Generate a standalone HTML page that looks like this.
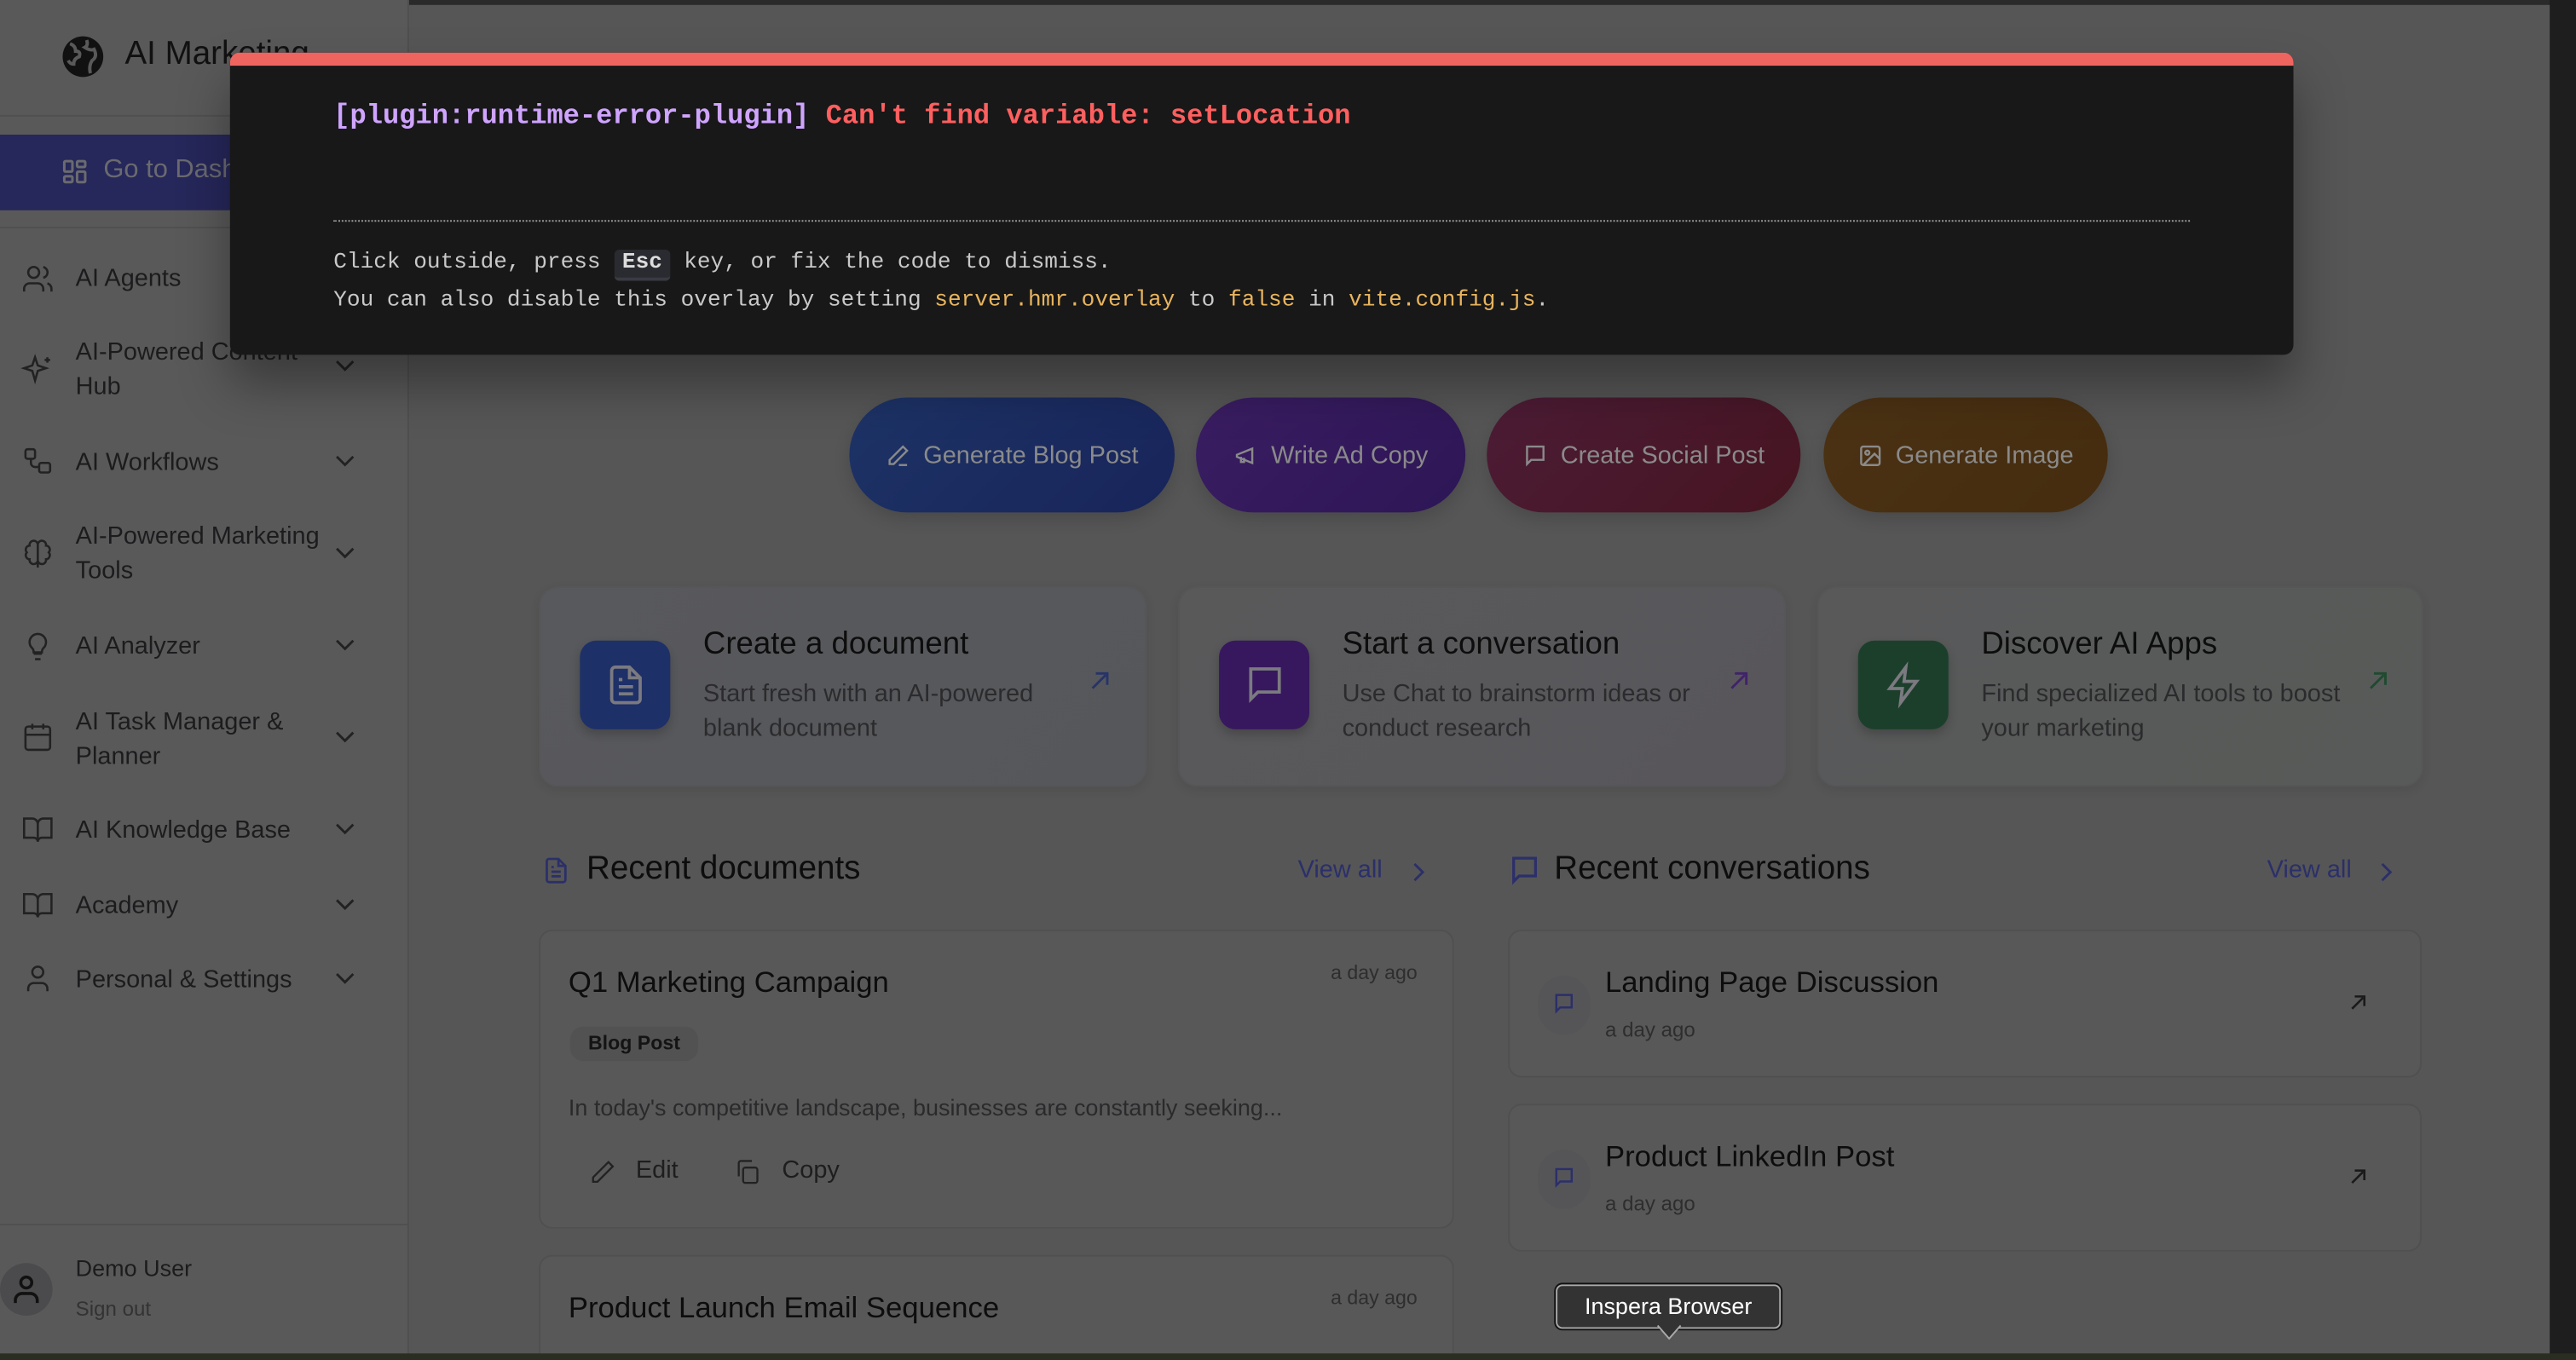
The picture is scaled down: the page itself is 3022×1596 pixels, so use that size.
<!DOCTYPE html>
<html><head><meta charset="utf-8">
<style>
html,body{margin:0;padding:0;width:3022px;height:1596px;overflow:hidden;background:#1e1e1e;}
#w{position:absolute;left:0;top:0;width:1568px;height:828px;transform:scale(1.92730,1.92754);transform-origin:0 0;font-family:"Liberation Sans",sans-serif;color:#151515;overflow:hidden;background:#565656;}
.a{position:absolute;}
.sb{left:0;top:0;width:248px;height:828px;background:#595959;border-right:1px solid #4f4f4f;}
.nav{position:absolute;left:46px;font-size:15px;color:#1c1c1e;line-height:21px;}
.ni{position:absolute;left:12px;}
.chev{position:absolute;left:204px;}
svg{overflow:visible}
.btn{position:absolute;top:242px;height:70px;border-radius:35px;color:#8a8a8a;font-size:15px;display:flex;align-items:center;justify-content:center;gap:8px;box-shadow:0 4px 10px rgba(0,0,0,.15);}
.card{position:absolute;top:357px;height:120px;border-radius:12px;background:#5a5a5c;box-shadow:0 2px 6px rgba(0,0,0,.08);border:1px solid #565658;}
.ic{position:absolute;left:24px;top:32px;width:55px;height:54px;border-radius:10px;display:flex;align-items:center;justify-content:center;box-shadow:0 3px 6px rgba(0,0,0,.2);}
.ct{position:absolute;left:99px;top:24px;font-size:19px;color:#0d0d0d;}
.cd{position:absolute;left:99px;top:54px;font-size:15px;line-height:21px;color:#2b2b2d;width:220px;}
.car{position:absolute;left:334px;top:50px;}
.dc{position:absolute;border-radius:8px;border:1px solid #505050;background:#585858;}
.mono{font-family:"Liberation Mono","DejaVu Sans Mono",monospace;}
</style></head><body>
<div id="w">
<div class="a" style="left:0;top:0;width:1568px;height:3px;background:#2a2a2a"></div>
<div class="a sb">
  <svg class="a" style="left:37px;top:21px" width="27" height="27" viewBox="0 0 24 24"><circle cx="12" cy="12" r="11" fill="#111"/><path d="M5 5 Q8 6 8 9 Q11 9 10 12 Q7 13 7 16 Q5 16 4 14 M14 3 Q15 6 13 7 Q16 9 18 8 Q20 12 17 14 Q15 17 16 21" fill="none" stroke="#595959" stroke-width="1.8"/></svg>
  <div class="a" style="left:76px;top:22px;font-size:20px;color:#111">AI Marketing</div>
  <div class="a" style="left:0;top:70px;width:248px;height:1px;background:#505050"></div>
  <div class="a" style="left:0;top:82px;width:240px;height:46px;border-radius:0 10px 10px 0;background:#26275a"></div>
  <svg class="a" style="left:37px;top:96px" width="17" height="17" viewBox="0 0 24 24" fill="none" stroke="#6a6a70" stroke-width="2.2"><rect x="3" y="3" width="7" height="9" rx="1"/><rect x="14" y="3" width="7" height="5" rx="1"/><rect x="14" y="12" width="7" height="9" rx="1"/><rect x="3" y="16" width="7" height="5" rx="1"/></svg>
  <div class="a" style="left:63px;top:95px;font-size:16px;color:#6a6a70">Go to Dashboard</div>
  <div class="a" style="left:0;top:138px;width:248px;height:1px;background:#505050"></div>

  <svg class="ni" style="top:160px" width="22" height="20" viewBox="0 0 24 24" fill="none" stroke="#222" stroke-width="1.6"><circle cx="9" cy="7" r="4"/><path d="M2 21v-2a4 4 0 0 1 4-4h6a4 4 0 0 1 4 4v2M16 3.1a4 4 0 0 1 0 7.8M22 21v-2a4 4 0 0 0-3-3.9"/></svg>
  <div class="nav" style="top:159px">AI Agents</div>

  <svg class="ni" style="top:215px" width="22" height="20" viewBox="0 0 24 24" fill="none" stroke="#222" stroke-width="1.6"><path d="M10 3l2 6 6 2-6 2-2 7-2-7-6-2 6-2z"/><path d="M19 3v4M17 5h4"/></svg>
  <div class="nav" style="top:204px">AI-Powered Content<br>Hub</div>
  <svg class="chev" style="top:219px" width="12" height="8" viewBox="0 0 12 8"><path d="M1 1l5 5 5-5" fill="none" stroke="#222" stroke-width="1.5"/></svg>

  <svg class="ni" style="top:271px" width="22" height="20" viewBox="0 0 24 24" fill="none" stroke="#222" stroke-width="1.6"><rect x="3" y="3" width="7" height="7" rx="1.5"/><rect x="13" y="13" width="8" height="7" rx="1.5"/><path d="M7 10v3a3 3 0 0 0 3 3h3"/></svg>
  <div class="nav" style="top:271px">AI Workflows</div>
  <svg class="chev" style="top:277px" width="12" height="8" viewBox="0 0 12 8"><path d="M1 1l5 5 5-5" fill="none" stroke="#222" stroke-width="1.5"/></svg>

  <svg class="ni" style="top:328px" width="22" height="20" viewBox="0 0 24 24" fill="none" stroke="#222" stroke-width="1.6"><path d="M12 4a3 3 0 0 0-6 1 3 3 0 0 0-2 5 3 3 0 0 0 2 5 3 3 0 0 0 6 1zM12 4a3 3 0 0 1 6 1 3 3 0 0 1 2 5 3 3 0 0 1-2 5 3 3 0 0 1-6 1zM12 4v17"/></svg>
  <div class="nav" style="top:316px">AI-Powered Marketing<br>Tools</div>
  <svg class="chev" style="top:333px" width="12" height="8" viewBox="0 0 12 8"><path d="M1 1l5 5 5-5" fill="none" stroke="#222" stroke-width="1.5"/></svg>

  <svg class="ni" style="top:383px" width="22" height="20" viewBox="0 0 24 24" fill="none" stroke="#222" stroke-width="1.6"><path d="M9 18h6M10 22h4M8 14a6 6 0 1 1 8 0c-1 1-1 2-1 3H9c0-1 0-2-1-3z"/></svg>
  <div class="nav" style="top:383px">AI Analyzer</div>
  <svg class="chev" style="top:389px" width="12" height="8" viewBox="0 0 12 8"><path d="M1 1l5 5 5-5" fill="none" stroke="#222" stroke-width="1.5"/></svg>

  <svg class="ni" style="top:439px" width="22" height="20" viewBox="0 0 24 24" fill="none" stroke="#222" stroke-width="1.6"><rect x="3" y="4" width="18" height="17" rx="2"/><path d="M8 2v4M16 2v4M3 10h18"/></svg>
  <div class="nav" style="top:429px">AI Task Manager &amp;<br>Planner</div>
  <svg class="chev" style="top:445px" width="12" height="8" viewBox="0 0 12 8"><path d="M1 1l5 5 5-5" fill="none" stroke="#222" stroke-width="1.5"/></svg>

  <svg class="ni" style="top:495px" width="22" height="20" viewBox="0 0 24 24" fill="none" stroke="#222" stroke-width="1.6"><path d="M2 4h6a4 4 0 0 1 4 4v13a3 3 0 0 0-3-3H2zM22 4h-6a4 4 0 0 0-4 4v13a3 3 0 0 1 3-3h7z"/></svg>
  <div class="nav" style="top:495px">AI Knowledge Base</div>
  <svg class="chev" style="top:501px" width="12" height="8" viewBox="0 0 12 8"><path d="M1 1l5 5 5-5" fill="none" stroke="#222" stroke-width="1.5"/></svg>

  <svg class="ni" style="top:541px" width="22" height="20" viewBox="0 0 24 24" fill="none" stroke="#222" stroke-width="1.6"><path d="M2 4h6a4 4 0 0 1 4 4v13a3 3 0 0 0-3-3H2zM22 4h-6a4 4 0 0 0-4 4v13a3 3 0 0 1 3-3h7z"/></svg>
  <div class="nav" style="top:541px">Academy</div>
  <svg class="chev" style="top:547px" width="12" height="8" viewBox="0 0 12 8"><path d="M1 1l5 5 5-5" fill="none" stroke="#222" stroke-width="1.5"/></svg>

  <svg class="ni" style="top:586px" width="22" height="20" viewBox="0 0 24 24" fill="none" stroke="#222" stroke-width="1.6"><circle cx="12" cy="7" r="4"/><path d="M5 21v-2a4 4 0 0 1 4-4h6a4 4 0 0 1 4 4v2"/></svg>
  <div class="nav" style="top:586px">Personal &amp; Settings</div>
  <svg class="chev" style="top:592px" width="12" height="8" viewBox="0 0 12 8"><path d="M1 1l5 5 5-5" fill="none" stroke="#222" stroke-width="1.5"/></svg>

  <div class="a" style="left:0;top:745px;width:248px;height:1px;background:#505050"></div>
  <div class="a" style="left:0;top:769px;width:32px;height:32px;border-radius:50%;background:#4b4b4d"></div>
  <svg class="a" style="left:6px;top:775px" width="20" height="20" viewBox="0 0 24 24" fill="none" stroke="#111" stroke-width="2.2"><circle cx="12" cy="7" r="4"/><path d="M4 22v-2a5 5 0 0 1 5-5h6a5 5 0 0 1 5 5v2"/></svg>
  <div class="a" style="left:46px;top:764px;font-size:14px;color:#1c1c1e">Demo User</div>
  <div class="a" style="left:46px;top:790px;font-size:12.5px;color:#333">Sign out</div>
</div>

<div class="btn" style="left:517px;width:198px;background:linear-gradient(135deg,#1d3366,#18245a)"><svg width="15" height="15" viewBox="0 0 24 24" fill="none" stroke="#8a8a8a" stroke-width="2"><path d="M17 3l4 4L8 20H4v-4z"/><path d="M13 21h8"/></svg>Generate Blog Post</div>
<div class="btn" style="left:728px;width:164px;background:linear-gradient(135deg,#3a1d62,#2d1656)"><svg width="15" height="15" viewBox="0 0 24 24" fill="none" stroke="#8a8a8a" stroke-width="2"><path d="M3 11l15-6v14L3 13z"/><path d="M7 13v5h3v-4"/></svg>Write Ad Copy</div>
<div class="btn" style="left:905px;width:191px;background:linear-gradient(135deg,#4c1c36,#461420)"><svg width="15" height="15" viewBox="0 0 24 24" fill="none" stroke="#8a8a8a" stroke-width="2"><path d="M4 3h16v13H8l-4 4z"/></svg>Create Social Post</div>
<div class="btn" style="left:1110px;width:173px;background:linear-gradient(135deg,#4b3214,#452c0f)"><svg width="15" height="15" viewBox="0 0 24 24" fill="none" stroke="#8a8a8a" stroke-width="2"><rect x="3" y="3" width="18" height="18" rx="2"/><circle cx="9" cy="9" r="2"/><path d="M21 15l-5-5L5 21"/></svg>Generate Image</div>

<div class="card" style="left:328px;width:368px;background:linear-gradient(135deg,#58595c,#56575b)">
  <div class="ic" style="background:#1e3068"><svg width="26" height="26" viewBox="0 0 24 24" fill="none" stroke="#7a7a80" stroke-width="1.8"><path d="M14 2H6a2 2 0 0 0-2 2v16a2 2 0 0 0 2 2h12a2 2 0 0 0 2-2V8z"/><path d="M14 2v6h6M8 13h8M8 17h8M8 9h2"/></svg></div>
  <div class="ct">Create a document</div>
  <div class="cd">Start fresh with an AI-powered blank document</div>
  <svg class="car" width="12" height="12" viewBox="0 0 12 12"><path d="M2 11L10 3M4 2h7v7" fill="none" stroke="#27346a" stroke-width="1.5"/></svg>
</div>
<div class="card" style="left:717px;width:368px;background:linear-gradient(135deg,#59595a,#58565b)">
  <div class="ic" style="background:#37185e"><svg width="26" height="26" viewBox="0 0 24 24" fill="none" stroke="#7a7a80" stroke-width="1.8"><path d="M4 3h16v13H8l-4 4z"/></svg></div>
  <div class="ct">Start a conversation</div>
  <div class="cd">Use Chat to brainstorm ideas or conduct research</div>
  <svg class="car" width="12" height="12" viewBox="0 0 12 12"><path d="M2 11L10 3M4 2h7v7" fill="none" stroke="#40226a" stroke-width="1.5"/></svg>
</div>
<div class="card" style="left:1106px;width:367px;background:linear-gradient(135deg,#59595a,#575a58)">
  <div class="ic" style="background:#1c3f2c"><svg width="26" height="26" viewBox="0 0 24 24" fill="none" stroke="#7a7a80" stroke-width="1.8"><path d="M13 2L4 14h7l-1 8 9-12h-7z"/></svg></div>
  <div class="ct">Discover AI Apps</div>
  <div class="cd">Find specialized AI tools to boost your marketing</div>
  <svg class="car" width="12" height="12" viewBox="0 0 12 12"><path d="M2 11L10 3M4 2h7v7" fill="none" stroke="#1f4a30" stroke-width="1.5"/></svg>
</div>

<svg class="a" style="left:330px;top:520px" width="17" height="20" viewBox="0 0 24 24" fill="none" stroke="#2b2f6a" stroke-width="2"><path d="M14 2H6a2 2 0 0 0-2 2v16a2 2 0 0 0 2 2h12a2 2 0 0 0 2-2V8z"/><path d="M14 2v6h6M8 13h8M8 17h8M8 9h2"/></svg>
<div class="a" style="left:357px;top:518px;font-size:20px;color:#0d0d0d">Recent documents</div>
<div class="a" style="left:790px;top:521px;font-size:15px;color:#2b2f6a">View all</div>
<svg class="a" style="left:859px;top:525px" width="8" height="12" viewBox="0 0 8 12"><path d="M2 1l5 5-5 5" fill="none" stroke="#2b2f6a" stroke-width="1.5"/></svg>

<svg class="a" style="left:918px;top:520px" width="20" height="20" viewBox="0 0 24 24" fill="none" stroke="#2b2f6a" stroke-width="2"><path d="M4 3h16v13H8l-4 4z"/></svg>
<div class="a" style="left:946px;top:518px;font-size:20px;color:#0d0d0d">Recent conversations</div>
<div class="a" style="left:1380px;top:521px;font-size:15px;color:#2b2f6a">View all</div>
<svg class="a" style="left:1448px;top:525px" width="8" height="12" viewBox="0 0 8 12"><path d="M2 1l5 5-5 5" fill="none" stroke="#2b2f6a" stroke-width="1.5"/></svg>

<div class="dc" style="left:328px;top:566px;width:555px;height:180px">
  <div class="a" style="left:17px;top:21px;font-size:18px;color:#0d0d0d">Q1 Marketing Campaign</div>
  <div class="a" style="left:481px;top:18px;font-size:12px;color:#2e2e2e">a day ago</div>
  <div class="a" style="left:18px;top:58px;height:21px;width:78px;border-radius:8px;background:#525252;font-size:12px;font-weight:bold;color:#141414;line-height:21px;text-align:center">Blog Post</div>
  <div class="a" style="left:17px;top:99px;font-size:14px;color:#2a2a2c">In today's competitive landscape, businesses are constantly seeking...</div>
  <svg class="a" style="left:30px;top:138px" width="16" height="17" viewBox="0 0 24 24" fill="none" stroke="#222" stroke-width="1.8"><path d="M17 3l4 4L7 21H3v-4z"/></svg>
  <div class="a" style="left:58px;top:137px;font-size:15px;color:#1e1e1e">Edit</div>
  <svg class="a" style="left:118px;top:138px" width="16" height="17" viewBox="0 0 24 24" fill="none" stroke="#222" stroke-width="1.8"><rect x="8" y="8" width="13" height="14" rx="2"/><path d="M4 16V4a2 2 0 0 1 2-2h10"/></svg>
  <div class="a" style="left:147px;top:137px;font-size:15px;color:#1e1e1e">Copy</div>
</div>
<div class="dc" style="left:328px;top:764px;width:555px;height:90px">
  <div class="a" style="left:17px;top:21px;font-size:18px;color:#0d0d0d">Product Launch Email Sequence</div>
  <div class="a" style="left:481px;top:18px;font-size:12px;color:#2e2e2e">a day ago</div>
</div>

<div class="dc" style="left:918px;top:566px;width:554px;height:88px">
  <div class="a" style="left:17px;top:27px;width:32px;height:36px;border-radius:16px;background:#555558"></div>
  <svg class="a" style="left:26px;top:36px" width="14" height="16" viewBox="0 0 24 24" fill="none" stroke="#2b2f6a" stroke-width="2.2"><path d="M4 3h16v13H8l-4 4z"/></svg>
  <div class="a" style="left:58px;top:21px;font-size:18px;color:#0d0d0d">Landing Page Discussion</div>
  <div class="a" style="left:58px;top:53px;font-size:12.5px;color:#2e2e2e">a day ago</div>
  <svg class="a" style="left:511px;top:38px" width="10" height="10" viewBox="0 0 12 12"><path d="M2 11L10 3M4 2h7v7" fill="none" stroke="#1a1a1a" stroke-width="1.6"/></svg>
</div>
<div class="dc" style="left:918px;top:672px;width:554px;height:88px">
  <div class="a" style="left:17px;top:27px;width:32px;height:36px;border-radius:16px;background:#555558"></div>
  <svg class="a" style="left:26px;top:36px" width="14" height="16" viewBox="0 0 24 24" fill="none" stroke="#2b2f6a" stroke-width="2.2"><path d="M4 3h16v13H8l-4 4z"/></svg>
  <div class="a" style="left:58px;top:21px;font-size:18px;color:#0d0d0d">Product LinkedIn Post</div>
  <div class="a" style="left:58px;top:53px;font-size:12.5px;color:#2e2e2e">a day ago</div>
  <svg class="a" style="left:511px;top:38px" width="10" height="10" viewBox="0 0 12 12"><path d="M2 11L10 3M4 2h7v7" fill="none" stroke="#1a1a1a" stroke-width="1.6"/></svg>
</div>

<div class="a" style="left:140px;top:32px;width:1256px;height:184px;background:#181818;border-radius:6px;box-shadow:0 18px 30px rgba(0,0,0,.35);overflow:hidden">
  <div class="a" style="left:0;top:0;width:1256px;height:8px;background:#ee6560"></div>
  <div class="a mono" style="left:63px;top:29px;font-size:16.65px;font-weight:bold;white-space:pre"><span style="color:#cfa4ff">[plugin:runtime-error-plugin]</span> <span style="color:#ff5f5f">Can't find variable: setLocation</span></div>
  <div class="a" style="left:63px;top:102px;width:1130px;border-top:1px dotted #9a9a9a"></div>
  <div class="a mono" style="left:63px;top:120px;font-size:13.55px;color:#c9c9c9;white-space:pre">Click outside, press <span style="display:inline-block;background:#2a2b30;border-radius:3px;border-bottom:2px solid #3a3b42;padding:1px 5px;font-weight:bold;color:#ddd">Esc</span> key, or fix the code to dismiss.</div>
  <div class="a mono" style="left:63px;top:144px;font-size:13.55px;color:#c9c9c9;white-space:pre">You can also disable this overlay by setting <span style="color:#e8b45e">server.hmr.overlay</span> to <span style="color:#e8b45e">false</span> in <span style="color:#e8b45e">vite.config.js</span>.</div>
</div>

<div class="a" style="left:947px;top:782px;width:135px;height:25px;background:#333;border:1px solid #aaa;border-radius:4px;box-shadow:0 0 0 1px #111;color:#fff;font-size:14px;line-height:25px;text-align:center">Inspera Browser</div>
<svg class="a" style="left:1009px;top:807px" width="14" height="9" viewBox="0 0 14 9"><path d="M0 0L7 8L14 0" fill="#333" stroke="#aaa" stroke-width="1"/></svg>

<div class="a" style="left:1552px;top:0;width:16px;height:828px;background:#1e1e1e"></div>
<div class="a" style="left:0;top:824px;width:1568px;height:4px;background:#2a2d22"></div>
</div>
</body></html>
